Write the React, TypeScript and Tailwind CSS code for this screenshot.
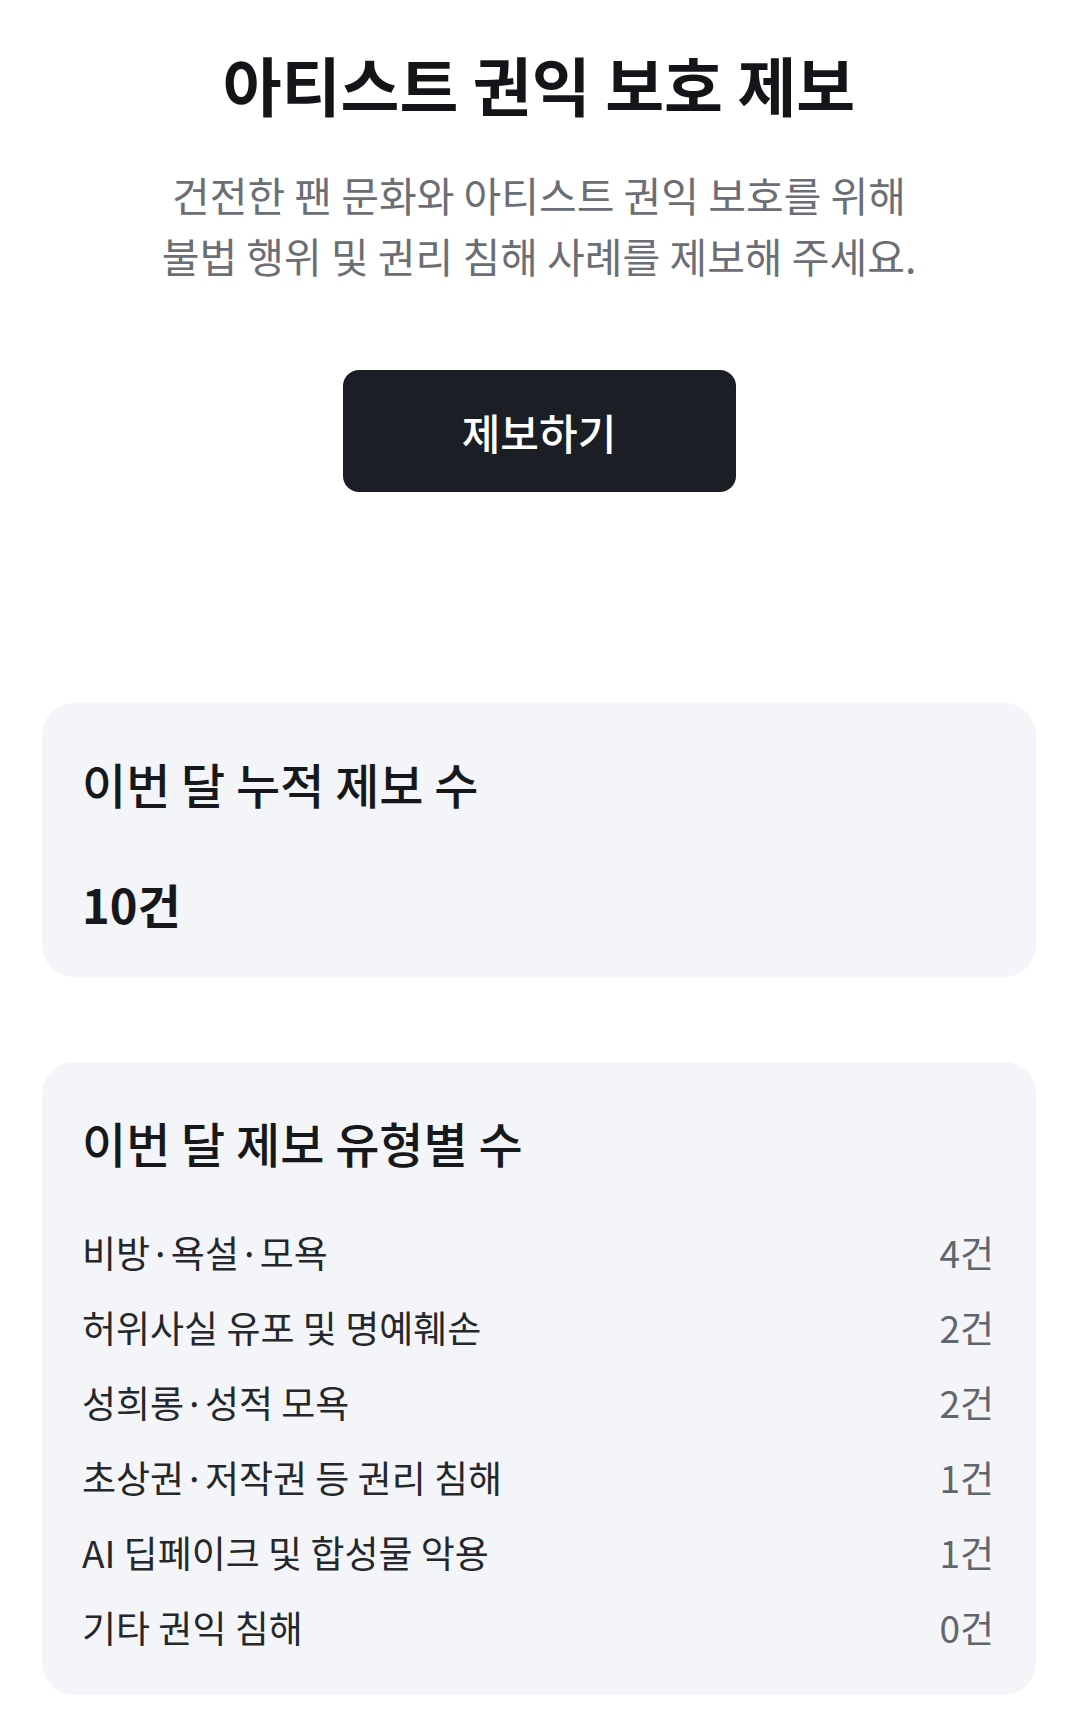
const stats = [
  { label: '비방·욕설·모욕', count: 4 },
  { label: '허위사실 유포 및 명예훼손', count: 2 },
  { label: '성희롱·성적 모욕', count: 2 },
  { label: '초상권·저작권 등 권리 침해', count: 1 },
  { label: 'AI 딥페이크 및 합성물 악용', count: 1 },
  { label: '기타 권익 침해', count: 0 },
];

export default function App() {
  return (
    <div className="min-h-screen bg-white font-['Noto_Sans_CJK_KR','Noto_Sans',sans-serif] text-[#1d1f23]">
      {/* header */}
      <div className="pt-[47px] text-center">
        <h1 className="text-[64px] font-bold leading-[72px] text-[#141518]">아티스트 권익 보호 제보</h1>
        <p className="mt-[45px] text-[41px] leading-[61px] text-[#6b6e74]">
          건전한 팬 문화와 아티스트 권익 보호를 위해
          <br />
          불법 행위 및 권리 침해 사례를 제보해 주세요.
        </p>
      </div>

      <div className="mt-[84px] flex justify-center">
        <button className="h-[122px] w-[393px] rounded-[16px] bg-[#1b1e24] text-[42px] font-medium text-white">
          제보하기
        </button>
      </div>

      {/* total */}
      <section className="mx-[42px] mt-[211px] rounded-[32px] bg-[#f4f5f8] pl-10 pr-[42px] pt-[52px] pb-[45px]">
        <h2 className="text-[48px] font-medium leading-[56px] text-[#17181b]">이번 달 누적 제보 수</h2>
        <p className="mt-[65px] text-[47px] font-bold leading-[56px] text-[#17181b]">10건</p>
      </section>

      {/* by type */}
      <section className="mx-[42px] mt-[85px] rounded-[32px] bg-[#f4f5f8] pl-10 pr-[42px] pt-[52px] pb-[30px]">
        <h2 className="text-[48px] font-medium leading-[56px] text-[#17181b]">이번 달 제보 유형별 수</h2>
        <ul className="mt-[45px]">
          {stats.map((s) => (
            <li key={s.label} className="flex h-[75px] items-center justify-between text-[37px]">
              <span className="text-[#25272b]">{s.label}</span>
              <span className="text-[#62656b]">{s.count}건</span>
            </li>
          ))}
        </ul>
      </section>
    </div>
  );
}
